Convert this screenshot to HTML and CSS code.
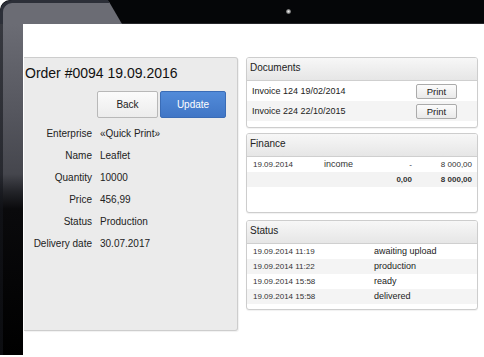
FILE: index.html
```html
<!DOCTYPE html>
<html lang="en">
<head>
    <meta charset="UTF-8">
    <meta name="viewport" content="width=device-width, initial-scale=1.0">
    <title>Order #0094</title>
    <link rel="stylesheet" href="styles.css">
</head>
<body>

    <div class="device">
        <!-- Tablet bezel -->
        <div class="bezel-top">
            <div class="bezel-corner"></div>
            <div class="camera"></div>
        </div>
        <div class="bezel-left"></div>

        <div class="screen">

            <!-- Order details -->
            <div class="order-panel">
                <h1 class="order-title">Order #0094 19.09.2016</h1>
                <div class="order-actions">
                    <button type="button" class="btn btn-back">Back</button>
                    <button type="button" class="btn btn-update">Update</button>
                </div>
                <dl class="order-fields">
                    <dt>Enterprise</dt><dd>«Quick Print»</dd>
                    <dt>Name</dt><dd>Leaflet</dd>
                    <dt>Quantity</dt><dd>10000</dd>
                    <dt>Price</dt><dd>456,99</dd>
                    <dt>Status</dt><dd>Production</dd>
                    <dt>Delivery date</dt><dd>30.07.2017</dd>
                </dl>
            </div>

            <div class="side">

                <!-- Documents -->
                <div class="box box-docs">
                    <div class="box-head">Documents</div>
                    <div class="box-body">
                        <div class="doc-row">
                            <span>Invoice 124 19/02/2014</span>
                            <button type="button" class="btn-print">Print</button>
                        </div>
                        <div class="doc-row">
                            <span>Invoice 224 22/10/2015</span>
                            <button type="button" class="btn-print">Print</button>
                        </div>
                    </div>
                </div>

                <!-- Finance -->
                <div class="box box-finance">
                    <div class="box-head">Finance</div>
                    <div class="box-body">
                        <div class="fin-row">
                            <span>19.09.2014</span>
                            <span class="fin-type">income</span>
                            <span class="num">-</span>
                            <span class="num">8 000,00</span>
                        </div>
                        <div class="fin-row fin-total">
                            <span></span>
                            <span></span>
                            <span class="num">0,00</span>
                            <span class="num">8 000,00</span>
                        </div>
                    </div>
                </div>

                <!-- Status history -->
                <div class="box box-status">
                    <div class="box-head">Status</div>
                    <div class="box-body">
                        <div class="status-row"><span>19.09.2014 11:19</span><span class="status-name">awaiting upload</span></div>
                        <div class="status-row"><span>19.09.2014 11:22</span><span class="status-name">production</span></div>
                        <div class="status-row"><span>19.09.2014 15:58</span><span class="status-name">ready</span></div>
                        <div class="status-row"><span>19.09.2014 15:58</span><span class="status-name">delivered</span></div>
                    </div>
                </div>

            </div>
        </div>
    </div>

</body>
</html>
```

FILE: styles.css
```css
/* Common Styles */
* {
    margin: 0;
    padding: 0;
    box-sizing: border-box;
    font-family: "Liberation Sans", Arial, sans-serif;
}

body {
    background-color: #fff;
    color: #222;
    overflow: hidden;
}

/* Tablet frame */
.device {
    display: grid;
    grid-template-columns: 23px 461px;
    grid-template-rows: 24px 331px;
    background-color: #050608;
    border-top-left-radius: 10px;
}

.bezel-top {
    grid-column: 1 / 3;
    display: flex;
    align-items: center;
    border-bottom: 1px solid #26272b;
}

.bezel-corner {
    align-self: stretch;
    width: 122px;
    height: 24px;
    background-color: #6b6c74;
    border-top: 3px solid #2c2f38;
    border-left: 3px solid #2c2f38;
    border-top-left-radius: 12px;
    clip-path: polygon(0 0, 108px 0, 122px 100%, 0 100%);
}

.camera {
    width: 5px;
    height: 5px;
    margin-left: 164px;
    border-radius: 50%;
    background: radial-gradient(circle, #f2f2f2 0, #9a9a9a 45%, rgba(40, 40, 40, 0) 100%);
}

.bezel-left {
    background:
        linear-gradient(90deg, rgba(20, 22, 28, 0.6) 0, rgba(20, 22, 28, 0.6) 3px, transparent 3px),
        linear-gradient(180deg, #6b6c74 0, #55565e 90px, #45464d 150px, #222328 168px, #0a0a0c 185px, #000 331px);
}

.screen {
    display: grid;
    grid-template-columns: 214px 232px;
    column-gap: 8px;
    align-items: start;
    padding: 33px 6px 0 1px;
    background-color: #fff;
}

/* Order panel */
.order-panel {
    height: 274px;
    padding: 7px 11px 0 0;
    background-color: #ebebeb;
    border: 1px solid #cdcdcd;
    border-left: none;
    border-radius: 0 3px 3px 0;
    box-shadow: 1px 1px 1px rgba(0, 0, 0, 0.06);
}

.order-title {
    padding-left: 1px;
    font-size: 14px;
    font-weight: normal;
    line-height: 16px;
    color: #111;
}

.order-actions {
    display: flex;
    justify-content: flex-end;
    gap: 2px;
    margin-top: 10px;
}

.btn {
    height: 27px;
    font-size: 10px;
    border-radius: 2px;
    cursor: pointer;
}

.btn-back {
    width: 61px;
    color: #222;
    background: linear-gradient(#fbfbfb, #ececec);
    border: 1px solid #b8b8b8;
}

.btn-update {
    width: 66px;
    color: #fff;
    background: linear-gradient(#528bd9, #4076c6);
    border: 1px solid #3a6cb6;
}

.order-fields {
    display: grid;
    grid-template-columns: 68px 1fr;
    column-gap: 8px;
    margin-top: 5px;
    font-size: 10px;
    line-height: 22px;
}

.order-fields dt {
    text-align: right;
}

/* Right column boxes */
.side {
    display: flex;
    flex-direction: column;
}

.box {
    background-color: #fff;
    border: 1px solid #cdcdcd;
    border-radius: 3px;
    overflow: hidden;
    box-shadow: 0 1px 1px rgba(0, 0, 0, 0.06);
}

.box-head {
    height: 23px;
    padding: 0 3px 2px;
    font-size: 10px;
    line-height: 20px;
    background: linear-gradient(#f7f7f7, #e6e6e6);
    border-bottom: 1px solid #cfcfcf;
}

.box-docs .box-body {
    padding-bottom: 6px;
}

.doc-row {
    display: flex;
    align-items: center;
    justify-content: space-between;
    height: 20px;
    padding: 0 20px 0 5px;
    font-size: 9px;
}

.doc-row:nth-child(even) {
    background-color: #f4f4f4;
}

.btn-print {
    width: 41px;
    height: 15px;
    font-size: 9.5px;
    line-height: 13px;
    color: #222;
    background: linear-gradient(#fcfcfc, #e9e9e9);
    border: 1px solid #ababab;
    border-radius: 2px;
    cursor: pointer;
}

.box-finance {
    margin-top: 5px;
}

.box-finance .box-body {
    min-height: 55px;
}

.fin-row {
    display: grid;
    grid-template-columns: 71px 40px 48px 1fr;
    height: 15px;
    padding: 0 5px 0 6px;
    font-size: 8px;
    line-height: 15px;
    color: #333;
}

.fin-type {
    font-size: 9px;
}

.num {
    text-align: right;
}

.fin-total {
    font-weight: bold;
    background-color: #f3f3f3;
}

.box-status {
    margin-top: 7px;
}

.box-status .box-body {
    padding-bottom: 5px;
}

.status-row {
    display: grid;
    grid-template-columns: 121px 1fr;
    height: 15px;
    padding-left: 6px;
    font-size: 8px;
    line-height: 15px;
    color: #333;
}

.status-row:nth-child(even) {
    background-color: #f4f4f4;
}

.status-name {
    font-size: 9px;
    color: #222;
}
```
